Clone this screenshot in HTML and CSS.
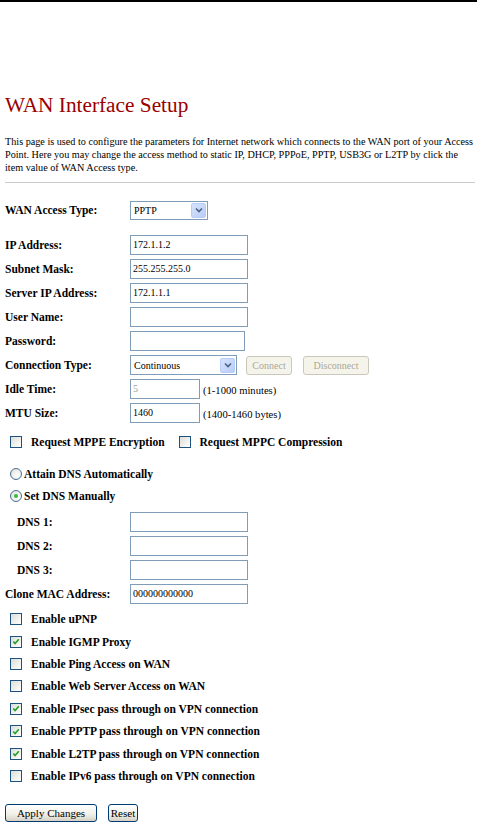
FILE: index.html
```html
<!DOCTYPE html>
<html>
<head>
<meta charset="utf-8">
<link rel="stylesheet" href="styles.css">
</head>
<body>
<div class="topline"></div>
<h1 class="title">WAN Interface Setup</h1>
<p class="desc">This page is used to configure the parameters for Internet network which connects to the WAN port of your Access Point. Here you may change the access method to static IP, DHCP, PPPoE, PPTP, USB3G or L2TP by click the item value of WAN Access type.</p>
<div class="sep"></div>

<div class="form">
  <div class="row">
    <span class="lbl">WAN Access Type:</span>
    <div class="sel sel-type"><span class="sel-text">PPTP</span><span class="arrow"><svg width="8" height="6" viewBox="0 0 8 6"><path d="M1 1.5 L4 4.5 L7 1.5" fill="none" stroke="#4d6185" stroke-width="1.6"/></svg></span></div>
  </div>

  <div class="block-ip">
    <div class="row"><span class="lbl">IP Address:</span><div class="inp w118">172.1.1.2</div></div>
    <div class="row"><span class="lbl">Subnet Mask:</span><div class="inp w118">255.255.255.0</div></div>
    <div class="row"><span class="lbl">Server IP Address:</span><div class="inp w118">172.1.1.1</div></div>
    <div class="row"><span class="lbl">User Name:</span><div class="inp w118"></div></div>
    <div class="row"><span class="lbl">Password:</span><div class="inp w115"></div></div>
    <div class="row">
      <span class="lbl">Connection Type:</span>
      <div class="sel sel-conn"><span class="sel-text">Continuous</span><span class="arrow"><svg width="8" height="6" viewBox="0 0 8 6"><path d="M1 1.5 L4 4.5 L7 1.5" fill="none" stroke="#4d6185" stroke-width="1.6"/></svg></span></div>
      <span class="btn-dis b-connect">Connect</span>
      <span class="btn-dis b-disconnect">Disconnect</span>
    </div>
    <div class="row"><span class="lbl">Idle Time:</span><div class="inp w70 grey">5</div><span class="note">(1-1000 minutes)</span></div>
    <div class="row"><span class="lbl">MTU Size:</span><div class="inp w70">1460</div><span class="note">(1400-1460 bytes)</span></div>
  </div>

  <div class="row crow mppe">
    <span class="cb"></span><span class="clbl">Request MPPE Encryption</span>
    <span class="cb cb2"></span><span class="clbl">Request MPPC Compression</span>
  </div>

  <div class="radios">
    <div class="row rrow"><span class="rb"></span><span class="clbl">Attain DNS Automatically</span></div>
    <div class="row rrow"><span class="rb on"></span><span class="clbl">Set DNS Manually</span></div>
  </div>

  <div class="row"><span class="lbl dns">DNS 1:</span><div class="inp w118"></div></div>
  <div class="row"><span class="lbl dns">DNS 2:</span><div class="inp w118"></div></div>
  <div class="row"><span class="lbl dns">DNS 3:</span><div class="inp w118"></div></div>
  <div class="row"><span class="lbl">Clone MAC Address:</span><div class="inp w118">000000000000</div></div>

  <div class="checks">
    <div class="crow"><span class="cb"></span><span class="clbl">Enable uPNP</span></div>
    <div class="crow"><span class="cb on"><svg width="11" height="11" viewBox="0 0 11 11"><path d="M2.5 5.5 L4.5 7.8 L8.6 3" fill="none" stroke="#21a121" stroke-width="1.7"/></svg></span><span class="clbl">Enable IGMP Proxy</span></div>
    <div class="crow"><span class="cb"></span><span class="clbl">Enable Ping Access on WAN</span></div>
    <div class="crow"><span class="cb"></span><span class="clbl">Enable Web Server Access on WAN</span></div>
    <div class="crow"><span class="cb on"><svg width="11" height="11" viewBox="0 0 11 11"><path d="M2.5 5.5 L4.5 7.8 L8.6 3" fill="none" stroke="#21a121" stroke-width="1.7"/></svg></span><span class="clbl">Enable IPsec pass through on VPN connection</span></div>
    <div class="crow"><span class="cb on"><svg width="11" height="11" viewBox="0 0 11 11"><path d="M2.5 5.5 L4.5 7.8 L8.6 3" fill="none" stroke="#21a121" stroke-width="1.7"/></svg></span><span class="clbl">Enable PPTP pass through on VPN connection</span></div>
    <div class="crow"><span class="cb on"><svg width="11" height="11" viewBox="0 0 11 11"><path d="M2.5 5.5 L4.5 7.8 L8.6 3" fill="none" stroke="#21a121" stroke-width="1.7"/></svg></span><span class="clbl">Enable L2TP pass through on VPN connection</span></div>
    <div class="crow"><span class="cb"></span><span class="clbl">Enable IPv6 pass through on VPN connection</span></div>
  </div>

  <div class="buttons">
    <span class="btn b-apply">Apply Changes</span>
    <span class="btn b-reset">Reset</span>
  </div>
</div>
</body>
</html>
```

FILE: styles.css
```css
html, body {
  margin: 0;
  padding: 0;
  background: #ffffff;
}
body {
  font-family: "Liberation Serif", "Times New Roman", serif;
  color: #000;
  padding-left: 5px;
  width: 488px;
}
.topline {
  margin-left: -5px;
  width: 477px;
  height: 2px;
  background: #000;
}
.title {
  margin: 91px 0 0 0;
  height: 24px;
  line-height: 24px;
  font-size: 21.3px;
  font-weight: normal;
  color: #990000;
}
.desc {
  margin: 18px 0 0 0;
  width: 470px;
  font-size: 10.2px;
  line-height: 13px;
}
.sep {
  margin-top: 8px;
  width: 470px;
  height: 1px;
  background: #cccccc;
}
.form {
  margin-top: 15px;
  font-size: 11.5px;
}
.row {
  display: flex;
  align-items: center;
  height: 24px;
}
.lbl {
  width: 125px;
  flex: none;
  font-weight: bold;
}
.lbl.dns {
  width: 113px;
  padding-left: 12px;
}
.block-ip {
  margin-top: 11px;
}
.inp {
  box-sizing: border-box;
  height: 20px;
  border: 1px solid #7f9db9;
  background: #fff;
  font-size: 10px;
  line-height: 17px;
  padding-left: 2px;
  white-space: nowrap;
}
.inp.grey { color: #a0a0a0; }
.w118 { width: 118px; }
.w115 { width: 115px; }
.w70 { width: 70px; }
.note {
  margin-left: 3px;
  font-size: 10.6px;
  padding-top: 3px;
}
.sel {
  box-sizing: border-box;
  height: 19px;
  border: 1px solid #7f9db9;
  background: #fff;
  display: flex;
  align-items: center;
  justify-content: space-between;
  font-size: 10px;
  padding: 1px;
}
.sel-text { padding-left: 2px; }
.sel-type { width: 78px; }
.sel-conn { width: 107px; height: 20px; }
.arrow {
  width: 15px;
  height: 15px;
  box-sizing: border-box;
  border: 1px solid #b9cdf5;
  border-radius: 2px;
  background: linear-gradient(135deg, #d6e3fd 0%, #b8cdf7 100%);
  display: flex;
  align-items: center;
  justify-content: center;
}
.btn-dis {
  box-sizing: border-box;
  height: 19px;
  border: 1px solid #cac8bb;
  border-radius: 3px;
  background: #f5f4ea;
  color: #aca899;
  font-size: 10px;
  display: flex;
  align-items: center;
  justify-content: center;
}
.b-connect { width: 46px; margin-left: 9px; }
.b-disconnect { width: 66px; margin-left: 11px; }

.crow {
  display: flex;
  align-items: center;
  height: 22.4px;
  font-weight: bold;
  padding-left: 5px;
}
.mppe {
  margin-top: 5px;
  height: 24px;
}
.cb {
  box-sizing: border-box;
  width: 12px;
  height: 12px;
  flex: none;
  border: 1px solid #1c5180;
  background: linear-gradient(135deg, #dcdcd7 0%, #f5f5f3 70%, #ffffff 100%);
  margin-right: 9px;
  display: flex;
  align-items: center;
  justify-content: center;
}
.cb2 { margin-left: 14px; }
.radios {
  margin-top: 9px;
}
.rrow {
  height: 22px;
  padding-left: 5px;
  font-weight: bold;
}
.rb {
  box-sizing: border-box;
  width: 12px;
  height: 12px;
  border-radius: 50%;
  border: 1px solid #4a6d93;
  background: radial-gradient(circle at 65% 65%, #ffffff 0%, #e4e4df 80%);
  margin-right: 2px;
  position: relative;
  flex: none;
}
.rb.on::after {
  content: "";
  position: absolute;
  left: 3px;
  top: 3px;
  width: 4px;
  height: 4px;
  border-radius: 50%;
  background: #2fbf3a;
}
.radios + .row { margin-top: 3px; }
.checks {
  margin-top: 2px;
}
.buttons {
  display: flex;
  margin-top: 17px;
}
.btn {
  box-sizing: border-box;
  height: 18px;
  border: 1px solid #003c74;
  border-radius: 3px;
  background: linear-gradient(180deg, #ffffff 0%, #f0efe7 60%, #d6d0c5 100%);
  font-size: 11px;
  display: flex;
  align-items: center;
  justify-content: center;
}
.b-apply { width: 92px; }
.b-reset { width: 30px; margin-left: 11px; }
```
